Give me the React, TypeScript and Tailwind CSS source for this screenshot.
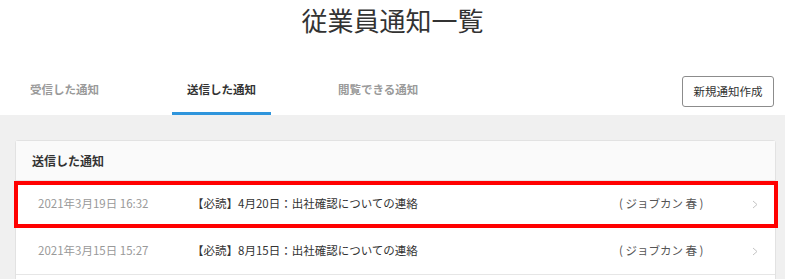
import React from 'react';

type Notice = {
  id: number;
  sentAt: string;
  title: string;
  author: string;
};

const NOTICES: Notice[] = [
  { id: 1, sentAt: '2021年3月19日 16:32', title: '【必読】4月20日：出社確認についての連絡', author: '( ジョブカン 春 )' },
  { id: 2, sentAt: '2021年3月15日 15:27', title: '【必読】8月15日：出社確認についての連絡', author: '( ジョブカン 春 )' },
];

const Chevron = () => (
  <svg width="6" height="9" viewBox="0 0 6 9" fill="none">
    <polyline points="1,1 5,4.5 1,8" stroke="#c4c4c4" strokeWidth="1" />
  </svg>
);

const App: React.FC = () => {
  return (
    <div className="h-[279px] w-full overflow-hidden bg-white font-['Noto_Sans_CJK_JP','Noto_Sans',sans-serif]">
      {/* Page title */}
      <div className="flex h-[40px] items-center justify-center">
        <h1 className="text-[26px] font-normal leading-none text-[#333]">従業員通知一覧</h1>
      </div>

      {/* Tabs */}
      <div className="mt-[28px] flex h-[47px] items-center pr-[11px]">
        <div className="ml-[15px] flex h-full items-stretch">
          <button className="border-b-[3px] border-transparent px-[15px] text-[11.5px] font-bold text-[#9a9a9a]">
            受信した通知
          </button>
          <button className="ml-[58px] border-b-[3px] border-[#2f95dc] px-[15px] text-[11.5px] font-bold text-[#333]">
            送信した通知
          </button>
          <button className="ml-[52px] border-b-[3px] border-transparent px-[15px] text-[11.5px] font-bold text-[#9a9a9a]">
            閲覧できる通知
          </button>
        </div>
        <button className="ml-auto h-[31px] w-[92px] rounded-[3px] border border-[#8c8c8c] bg-white text-[11.5px] text-[#333]">
          新規通知作成
        </button>
      </div>

      {/* Content area */}
      <div className="h-[200px] bg-[#f0f0f0] pl-[15px] pr-[9px] pt-[25px]">
        <div className="h-[200px] rounded-[3px] border border-[#e2e2e2] bg-white">
          <div className="flex h-[40px] items-center border-b border-[#e6e6e6] bg-[#fafafa] pl-[16px]">
            <span className="text-[12px] font-bold text-[#333]">送信した通知</span>
          </div>
          {NOTICES.map((n, i) => (
            <div
              key={n.id}
              className="relative flex h-[47px] items-center border-b border-[#e6e6e6] pl-[22px] pr-[17px] text-[11.5px]"
            >
              <span className="w-[154px] shrink-0 text-[#999]">{n.sentAt}</span>
              <span className="flex-1 text-[#333]">{n.title}</span>
              <span className="w-[133px] shrink-0 text-[#555]">{n.author}</span>
              <Chevron />
              {i === 0 && (
                <div className="pointer-events-none absolute -left-[2px] -right-[3px] top-0 -bottom-[1px] border-4 border-[#ff0000]" />
              )}
            </div>
          ))}
        </div>
      </div>
    </div>
  );
};

export default App;
